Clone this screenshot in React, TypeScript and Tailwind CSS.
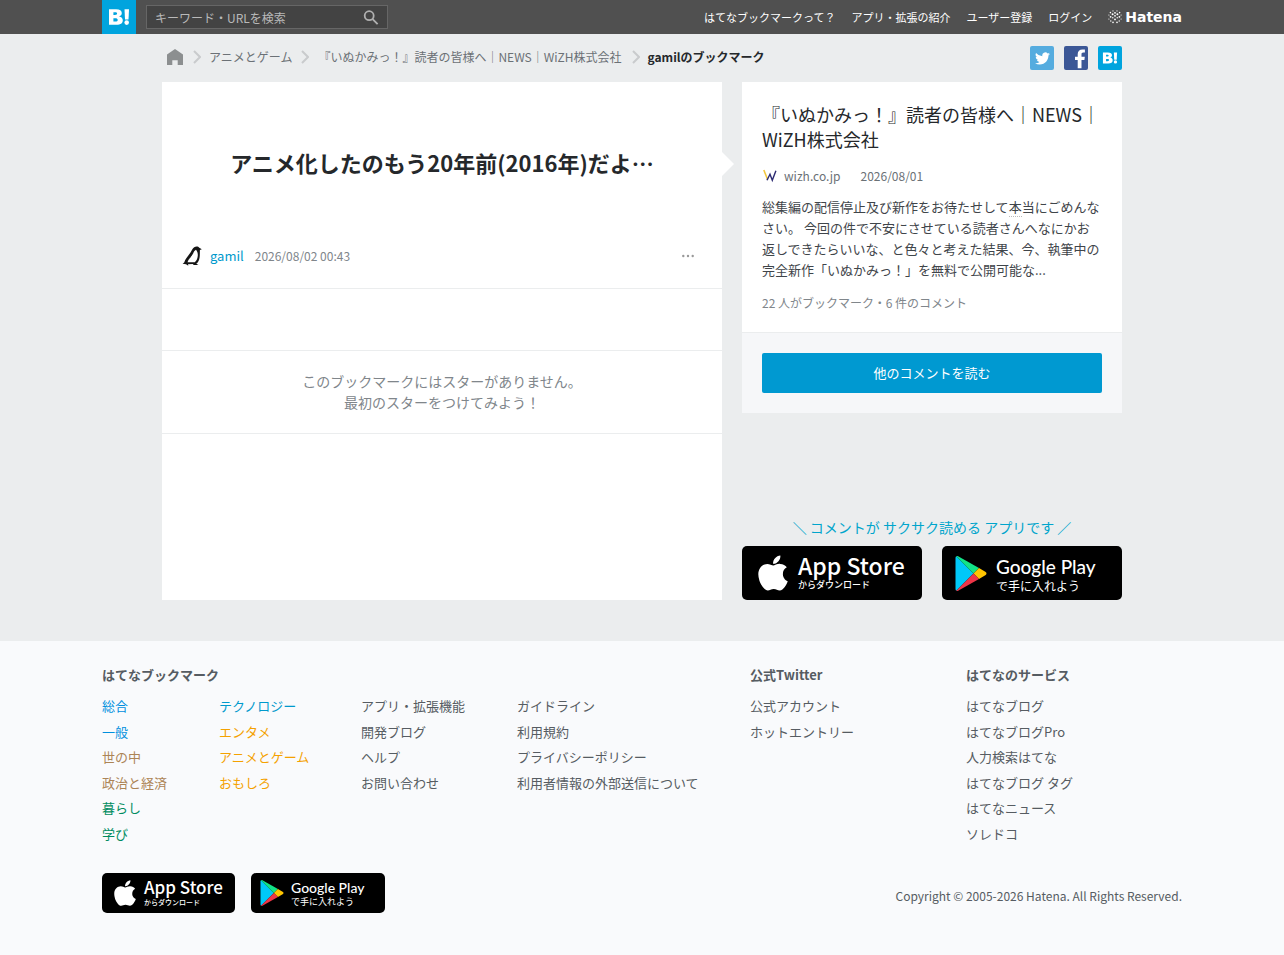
import React from "react";
import { FaApple } from "react-icons/fa";

const headerLinks = ["はてなブックマークって？", "アプリ・拡張の紹介", "ユーザー登録", "ログイン"];

type FooterLink = { label: string; tone?: string };

const bookmarkColumns: { width: string; links: FooterLink[] }[] = [
  {
    width: "w-[117px]",
    links: [
      { label: "総合", tone: "text-[#008fde]" },
      { label: "一般", tone: "text-[#008fde]" },
      { label: "世の中", tone: "text-[#ac8456]" },
      { label: "政治と経済", tone: "text-[#ac8456]" },
      { label: "暮らし", tone: "text-[#008c5f]" },
      { label: "学び", tone: "text-[#008c5f]" },
    ],
  },
  {
    width: "w-[142px]",
    links: [
      { label: "テクノロジー", tone: "text-[#0099cc]" },
      { label: "エンタメ", tone: "text-[#f4a100]" },
      { label: "アニメとゲーム", tone: "text-[#f4a100]" },
      { label: "おもしろ", tone: "text-[#f4a100]" },
    ],
  },
  {
    width: "w-[156px]",
    links: [{ label: "アプリ・拡張機能" }, { label: "開発ブログ" }, { label: "ヘルプ" }, { label: "お問い合わせ" }],
  },
  {
    width: "w-[233px]",
    links: [
      { label: "ガイドライン" },
      { label: "利用規約" },
      { label: "プライバシーポリシー" },
      { label: "利用者情報の外部送信について" },
    ],
  },
];

const twitterLinks: FooterLink[] = [{ label: "公式アカウント" }, { label: "ホットエントリー" }];
const serviceLinks: FooterLink[] = [
  { label: "はてなブログ" },
  { label: "はてなブログPro" },
  { label: "人力検索はてな" },
  { label: "はてなブログ タグ" },
  { label: "はてなニュース" },
  { label: "ソレドコ" },
];

function BookmarkMark({ className }: { className: string }) {
  return (
    <svg viewBox="0 0 34 34" className={className} fill="#fff" aria-hidden="true">
      <path
        fillRule="evenodd"
        d="M7 9.200h7.100c3.800 0 5.700 1.300 5.700 3.900 0 1.800-1 2.900-2.700 3.300 2.400.4 3.700 1.800 3.700 3.900 0 3-2.200 4.500-6.200 4.500H7zM11.400 12.300v2.700h1.600c1.400 0 2.100-.4 2.100-1.400s-.7-1.300-2.100-1.300zM11.400 18.300v3.200h1.800c1.700 0 2.500-.5 2.500-1.600s-.8-1.600-2.500-1.600z"
      />
      <path d="M22.500 9.200h4.500l-.5 10.200h-3.500z" />
      <circle cx="24.700" cy="22.600" r="2.300" />
    </svg>
  );
}

function HatenaDots() {
  const dots = [
    [5, 0.9, 0.6], [9, 0.9, 0.6], [2.4, 2.6, 0.8], [7, 2.8, 0.9], [11.6, 2.6, 0.8],
    [4.6, 4.2, 1], [9.4, 4.2, 1], [0.9, 5, 0.6], [13.1, 5, 0.6], [7, 5.8, 0.9],
    [2.6, 6.8, 0.9], [11.4, 6.8, 0.9], [4.8, 7.8, 0.7], [9.2, 7.8, 0.7], [0.9, 9, 0.6], [13.1, 9, 0.6],
    [7, 9.4, 0.9], [2.8, 11, 0.7], [11.2, 11, 0.7], [5, 12.4, 0.8], [9, 12.4, 0.8],
  ];
  return (
    <svg viewBox="0 0 14 14" className="size-[14px]" fill="#fff" aria-hidden="true">
      {dots.map(([x, y, r]) => (
        <circle key={`${x}-${y}`} cx={x} cy={y} r={r} />
      ))}
    </svg>
  );
}

function Chevron() {
  return (
    <svg viewBox="0 0 8 14" className="h-[14px] w-2 shrink-0" fill="none" stroke="#c9cbcd" strokeWidth="2" aria-hidden="true">
      <path d="M1 1l6 6-6 6" />
    </svg>
  );
}

function PlayTriangle({ className }: { className: string }) {
  return (
    <svg viewBox="0 0 31 35" className={className} aria-hidden="true">
      <path d="M.8.300C.3.700 0 1.300 0 2v31c0 .7.300 1.300.8 1.700L18 17.500z" fill="#00c8f8" />
      <path d="M.8.300C1.400-.1 2 0 2.600.300L23.500 12 18 17.500z" fill="#12e387" />
      <path d="M23.500 12l6.300 3.700c1.600.9 1.600 2.700 0 3.600L23.500 23 18 17.500z" fill="#ffc400" />
      <path d="M.8 34.700c.6.400 1.200.300 1.800 0L23.500 23 18 17.500z" fill="#ee3547" />
    </svg>
  );
}

function AppStoreBadge({ small = false }: { small?: boolean }) {
  return (
    <a
      href="#app-store"
      className={`flex items-center rounded-[5px] bg-black text-white ${small ? "h-10 w-[133px] gap-2 pl-3" : "h-[54px] w-[180px] gap-[10px] pl-4"}`}
    >
      <FaApple className={small ? "h-[30px] w-[22px]" : "h-10 w-[30px]"} aria-hidden="true" />
      <span className="flex flex-col pb-[2px] font-medium">
        <span className={small ? "text-[17px] leading-[20px]" : "text-[23px] leading-[26px]"}>App Store</span>
        <span className={small ? "text-[7px] leading-[10px]" : "text-[9px] leading-[14px]"}>からダウンロード</span>
      </span>
    </a>
  );
}

function GooglePlayBadge({ small = false }: { small?: boolean }) {
  return (
    <a
      href="#google-play"
      className={`flex items-center rounded-[5px] bg-black text-white ${small ? "h-10 w-[134px] gap-[7px] pl-[9px]" : "h-[54px] w-[180px] gap-[9px] pl-[13px]"}`}
    >
      <PlayTriangle className={small ? "h-[26px] w-6" : "h-[35px] w-8"} />
      <span className={small ? "flex flex-col" : "flex flex-col pt-[2px]"}>
        <span
          className={`font-['Lato','Noto_Sans_CJK_JP',sans-serif] font-medium ${small ? "text-[14px] leading-[17px]" : "text-[19px] leading-[24px]"}`}
        >
          Google Play
        </span>
        <span className={small ? "text-[9px] leading-[12px]" : "text-[12px] leading-[14px]"}>で手に入れよう</span>
      </span>
    </a>
  );
}

function LinkList({ links }: { links: FooterLink[] }) {
  return (
    <ul>
      {links.map((link) => (
        <li key={link.label} className="flex h-[26px] items-center even:h-[25px]">
          <a href="#footer" className={`whitespace-nowrap ${link.tone ?? "text-[#565c62]"}`}>
            {link.label}
          </a>
        </li>
      ))}
    </ul>
  );
}

function Header() {
  return (
    <header className="bg-[#505050]">
      <div className="mx-auto flex h-[34px] max-w-[1080px] items-center">
        <a href="#top" aria-label="はてなブックマーク" className="size-[34px] bg-[#00a4de]">
          <BookmarkMark className="size-[34px]" />
        </a>
        <form className="ml-[10px] flex h-6 w-[242px] items-center border border-[#666] bg-[#434343]">
          <input
            type="text"
            aria-label="キーワード・URLを検索"
            placeholder="キーワード・URLを検索"
            className="h-full min-w-0 flex-1 bg-transparent pl-2 text-[12px] text-white outline-none placeholder:text-[#b9b9b9]"
          />
          <button type="button" aria-label="検索" className="flex w-8 justify-center">
            <svg viewBox="0 0 16 16" className="size-4" fill="none" stroke="#b0b0b0" strokeWidth="1.800" aria-hidden="true">
              <circle cx="6.200" cy="6.700" r="4.500" />
              <path d="M9.600 10.100l5 5" />
            </svg>
          </button>
        </form>
        <nav className="ml-auto flex items-center gap-4 text-[11px] text-white">
          {headerLinks.map((label) => (
            <a key={label} href="#header">
              {label}
            </a>
          ))}
          <a href="#hatena" className="flex items-center gap-[3px] font-['DejaVu_Sans',sans-serif] text-[14px] leading-[16px] font-bold">
            <HatenaDots />
            Hatena
          </a>
        </nav>
      </div>
    </header>
  );
}

function Breadcrumb() {
  return (
    <div className="flex h-12 items-center justify-between">
      <nav className="flex items-center pb-[2px] text-[12px] text-[#6b7176]" aria-label="パンくず">
        <a href="#home" aria-label="ホーム" className="ml-[5px]">
          <svg viewBox="0 0 16 16" className="size-4" fill="#8c8f90" aria-hidden="true">
            <path d="M8 0L0 5.500V16h5.300v-4.700h5.400V16H16V5.500z" />
          </svg>
        </a>
        <span className="mr-2 ml-[10px]"><Chevron /></span>
        <a href="#anime">アニメとゲーム</a>
        <span className="mx-[9px]"><Chevron /></span>
        <a href="#entry">『いぬかみっ！』読者の皆様へ｜NEWS｜WiZH株式会社</a>
        <span className="mr-2 ml-[10px]"><Chevron /></span>
        <span className="font-bold text-[#25282b]">gamilのブックマーク</span>
      </nav>
      <div className="flex gap-[10px]">
        <a href="#twitter" aria-label="Twitter" className="flex size-6 items-center justify-center rounded-[2px] bg-[#55acdf]">
          <svg viewBox="0 0 24 24" className="size-[15px]" fill="#fff" aria-hidden="true">
            <path d="M24 4.600a10 10 0 01-2.800.8 4.900 4.900 0 002.100-2.700 9.800 9.800 0 01-3.100 1.200 4.900 4.900 0 00-8.400 4.500A14 14 0 011.700 3.200a4.900 4.900 0 001.500 6.500 4.900 4.900 0 01-2.200-.6v.1a4.900 4.900 0 003.900 4.800 4.900 4.900 0 01-2.200.1 4.900 4.900 0 004.600 3.400A9.900 9.900 0 010 19.500a14 14 0 007.500 2.200c9.100 0 14-7.500 14-14v-.6A10 10 0 0024 4.600z" />
          </svg>
        </a>
        <a href="#facebook" aria-label="Facebook" className="size-6 overflow-hidden rounded-[2px] bg-[#3b5796]">
          <svg viewBox="0 0 24 24" className="size-6" fill="#fff" aria-hidden="true">
            <path d="M13.700 22.200v-8.300H11v-3.200h2.700V8.300c0-3.200 1.800-4.900 4.800-4.900h2.400v3.200h-1.500c-1.500 0-1.900.7-1.900 1.900v2.200h3.300l-.4 3.200h-2.900v8.300z" />
          </svg>
        </a>
        <a href="#bookmark" aria-label="はてなブックマークに追加" className="size-6 rounded-[2px] bg-[#00a4de]">
          <BookmarkMark className="size-6" />
        </a>
      </div>
    </div>
  );
}

function UserAvatar() {
  return (
    <svg viewBox="0 0 20 20" className="size-5" fill="#151515" aria-hidden="true">
      <path
        fillRule="evenodd"
        d="M12.200 1.200C14 .2 16.300.3 17.300 1.800L19.800 3.200 17.900 3.900C17.800 6.500 18 8.500 17.600 11.500 17.200 14.500 16 16.700 14.300 17.800L16.500 18.900 11.800 18.900 10.700 18 6 18.200 6.300 19.800 4 18.300.6 17.800 2.200 16.400C3.500 12.500 6.500 9.500 8.500 6.500 9.800 4.500 10.500 2.300 12.200 1.200zM14 3.800C12.500 4.500 11.800 6 10.800 7.800 9 10.500 6.500 13 5.500 16.300L12.800 16.200C14.800 14.500 15.700 12 15.800 9.500 15.900 7.500 15.500 5.500 14 3.800z"
      />
      <path d="M11.700 6.500L7 13.500 9 8.500z" />
    </svg>
  );
}

function BookmarkPanel() {
  return (
    <main className="relative flex h-[518px] min-w-0 flex-1 flex-col bg-white">
      <span className="absolute top-[70px] -right-3 h-6 w-3 bg-white [clip-path:polygon(0_0,100%_50%,0_100%)]" />
      <h1 className="px-5 pt-16 text-center text-[22px] leading-[32px] font-bold text-[#25282b]">
        アニメ化したのもう20年前(2016年)だよ…
      </h1>
      <div className="mt-[62px] flex h-[49px] items-start border-b border-[#ebedee] px-5">
        <a href="#gamil" className="flex h-8 items-center gap-2 text-[13px] text-[#0099cc]">
          <UserAvatar />
          gamil
        </a>
        <a href="#date" className="ml-[11px] flex h-8 items-center text-[12px] text-[#80868b]">
          2026/08/02 00:43
        </a>
        <button type="button" aria-label="メニュー" className="ml-auto flex h-8 w-7 items-center justify-center">
          <svg viewBox="0 0 12 4" className="h-1 w-3" fill="#999" aria-hidden="true">
            <circle cx="1.300" cy="2" r="1.200" />
            <circle cx="6" cy="2" r="1.200" />
            <circle cx="10.700" cy="2" r="1.200" />
          </svg>
        </button>
      </div>
      <div className="h-[62px] border-b border-[#ebedee]" />
      <p className="border-b border-[#ebedee] py-5 text-center text-[14px] leading-[21px] text-[#80868b]">
        このブックマークにはスターがありません。
        <br />
        最初のスターをつけてみよう！
      </p>
    </main>
  );
}

function Sidebar() {
  return (
    <aside className="flex w-[380px] shrink-0 flex-col justify-between">
      <section>
        <div className="border-b border-[#ebedee] bg-white px-5 pt-5 pb-[19px]">
          <h2 className="text-[18px] leading-[25px] text-[#25282b]">
            <a href="#entry">『いぬかみっ！』読者の皆様へ｜NEWS｜WiZH株式会社</a>
          </h2>
          <div className="mt-3 flex h-6 items-center text-[12px] text-[#6b7176]">
            <svg viewBox="0 0 16 16" className="size-4" fill="none" aria-hidden="true">
              <path d="M1.800 2l3.800 9.500" stroke="#f3c63c" strokeWidth="1.600" />
              <path d="M5 12.300l3-6 2.300 6 3.600-9.500" stroke="#2d2b73" strokeWidth="1.400" />
            </svg>
            <a href="#site" className="ml-[6px]">wizh.co.jp</a>
            <span className="ml-5">2026/08/01</span>
          </div>
          <p className="mt-2 text-[13px] leading-[21px] text-[#3f454a]">
            総集編の配信停止及び新作をお待たせして<span className="border-b border-dotted border-[#bbb]">本</span>当にごめんなさい。 今回の件で不安にさせている読者さんへなにかお返しできたらいいな、と色々と考えた結果、今、執筆中の完全新作「いぬかみっ！」を無料で公開可能な...
          </p>
          <p className="mt-[13px] text-[12px] leading-[20px] text-[#80868b]">22 人がブックマーク・6 件のコメント</p>
        </div>
        <div className="bg-[#f6f7f9] p-5">
          <a href="#comments" className="flex h-10 items-center justify-center rounded-[2px] bg-[#0099d1] text-[13px] text-white">
            他のコメントを読む
          </a>
        </div>
      </section>
      <section>
        <p className="mb-[9px] text-center text-[14px] leading-[20px] text-[#00a5cc]">＼ コメントが サクサク読める アプリです ／</p>
        <div className="flex justify-between">
          <AppStoreBadge />
          <GooglePlayBadge />
        </div>
      </section>
    </aside>
  );
}

function Footer() {
  return (
    <footer className="flex-1 bg-[#f9fafc] text-[13px] text-[#565c62]">
      <div className="mx-auto max-w-[1080px] pt-6">
        <div className="flex">
          <section className="w-[648px]">
            <h3 className="mb-2 leading-[20px] font-bold">はてなブックマーク</h3>
            <div className="flex">
              {bookmarkColumns.map((column) => (
                <div key={column.width} className={column.width}>
                  <LinkList links={column.links} />
                </div>
              ))}
            </div>
          </section>
          <section className="w-[216px]">
            <h3 className="mb-2 leading-[20px] font-bold">公式Twitter</h3>
            <LinkList links={twitterLinks} />
          </section>
          <section>
            <h3 className="mb-2 leading-[20px] font-bold">はてなのサービス</h3>
            <LinkList links={serviceLinks} />
          </section>
        </div>
        <div className="mt-[27px] flex items-center gap-4">
          <AppStoreBadge small />
          <GooglePlayBadge small />
          <small className="ml-auto pt-[6px] text-[12px]">Copyright © 2005-2026 Hatena. All Rights Reserved.</small>
        </div>
      </div>
    </footer>
  );
}

export default function App() {
  return (
    <div lang="ja" className="flex min-h-screen flex-col bg-[#ebedee] font-['Noto_Sans_CJK_JP',sans-serif]">
      <Header />
      <div className="mx-auto w-full max-w-[960px] pb-[41px]">
        <Breadcrumb />
        <div className="flex gap-5">
          <BookmarkPanel />
          <Sidebar />
        </div>
      </div>
      <Footer />
    </div>
  );
}
